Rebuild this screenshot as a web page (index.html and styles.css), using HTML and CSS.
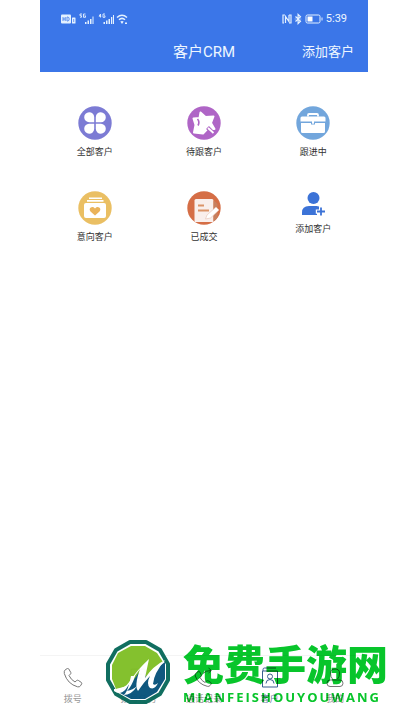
FILE: index.html
```html
<!DOCTYPE html>
<html lang="zh-CN">
<head>
<meta charset="utf-8">
<meta name="viewport" content="width=device-width, initial-scale=1">
<title>客户CRM</title>
<link rel="stylesheet" href="styles.css">
</head>
<body>
<div class="app">
  <header class="top">
    <div class="status">
      <div class="status-group">
        <svg width="68" height="12" viewBox="0 0 68 12" fill="#e4f1ff" aria-hidden="true">
          <rect x="0" y="1.500" width="10" height="9" rx="1"/>
          <path d="M2 4v4M4.200 4v4M2 6h2.200M6 4v4h.5q1.700 0 1.700-2T6.500 4z" stroke="#3b76e8" stroke-width=".8" fill="none"/>
          <rect x="11" y="4.500" width="3.500" height="6" rx=".5"/><path d="M12.700 6v3" stroke="#3b76e8" stroke-width=".7"/>
          <path d="M21 1h-2v1.700h1.500v1.500H19M24.500 1h-2v3.300h2V2.800h-1" fill="none" stroke="#e4f1ff" stroke-width=".9"/>
          <path d="M24 9h1.500v2H24zM26.500 7.500H28V11h-1.500zM29 6h1.500v5H29zM31.500 3.500h1V11h-1z"/>
          <path d="M39.500 4.500V1L38 3.200h2.300M44 1h-2v3.300h2V2.800h-1" fill="none" stroke="#e4f1ff" stroke-width=".9"/>
          <path d="M42.500 9H44v2h-1.500zM45 7.500h1.500V11H45zM47.500 6H49v5h-1.500zM50 4h1.300v7H50zM52 2h1v9h-1z"/>
          <path d="M56 4.500q5-4.500 10 0M58 6.800q3-2.800 6 0" fill="none" stroke="#e4f1ff" stroke-width="1.500"/>
          <path d="M59.300 8.600q1.700-1.400 3.400 0L61 11zM64 9.500h2V11h-2z"/>
        </svg>
      </div>
      <div class="status-group">
        <svg width="42" height="12" viewBox="0 0 42 12" fill="none" stroke="#e4f1ff" aria-hidden="true">
          <path d="M4 2H2v8h1M4.500 10V3.500L8 8.500V2M8 2h2v8H8" stroke-width="1.200"/>
          <path d="M14.500 3.500l5 4.700-2.400 2.300v-9l2.400 2.300-5 4.700" stroke-width="1.200"/>
          <path d="M13.800 6h.7M19.500 6h.7"/>
          <rect x="25" y="2" width="14" height="8" rx="1.500"/>
          <rect x="26.500" y="3.500" width="5" height="5" fill="#fff" stroke="none"/>
          <path d="M41 4.500v3"/>
        </svg>
        <time>5:39</time>
      </div>
    </div>
    <div class="title-bar">
      <h1>客户CRM</h1>
      <button class="add" type="button">添加客户</button>
    </div>
  </header>

  <main class="menu">
    <a class="entry" href="#all">
      <svg width="34" height="34" viewBox="0 0 34 34" aria-hidden="true"><circle cx="17" cy="17" r="16.700" fill="#7c7bd4"/><path fill="#fff" d="M16.200 16.200h-5A5 5 0 1 1 16.200 11zM17.800 16.200V11a5 5 0 1 1 5.200 5.200zM16.200 17.800V23A5 5 0 1 1 11 17.800zM17.800 17.800H23a5 5 0 1 1-5.200 5.200z"/></svg>
      <span>全部客户</span>
    </a>
    <a class="entry" href="#pending">
      <svg width="34" height="34" viewBox="0 0 34 34" aria-hidden="true"><circle cx="17" cy="17" r="16.700" fill="#af65c6"/><path d="M13.500 6.500l5 4.500 8-.5-2.500 6.500 3.500 6-7-.2-4.500 4.700-9-1 1.500-7.500-2-6.500 6-.5z" fill="#fff" stroke="#fff" stroke-width="2" stroke-linejoin="round"/><path d="M10.500 13q2.500 3 .5 6.500" fill="none" stroke="#af65c6" stroke-width="1.600"/><path d="M20.500 21.500l6 6" stroke="#af65c6" stroke-width="4"/><path d="M21 22l5.500 5" stroke="#fff" stroke-width="1.800"/></svg>
      <span>待跟客户</span>
    </a>
    <a class="entry" href="#following">
      <svg width="34" height="34" viewBox="0 0 34 34" aria-hidden="true"><circle cx="17" cy="17" r="16.700" fill="#72a6dc"/><path d="M12 10.500V9q0-1 1-1h8q1 0 1 1v1.500" fill="none" stroke="#fff" stroke-width="1.800"/><path d="M6 10.500h22q1.500 0 1.500 1.500v3.500h-25V12q0-1.500 1.500-1.500zM5 17h10v1.500h4V17h10v8.500q0 1.500-1.500 1.500h-21Q5 27 5 25.500z" fill="#fff"/><rect x="16" y="15" width="2" height="2.700" fill="#fff"/></svg>
      <span>跟进中</span>
    </a>
    <a class="entry" href="#intent">
      <svg width="34" height="34" viewBox="0 0 34 34" aria-hidden="true"><circle cx="17" cy="17" r="16.700" fill="#eabf63"/><path d="M11 6.500h13V8H11zM9 9h16.500v1.800H9z" fill="#fff"/><rect x="6" y="12" width="22" height="15" rx="2" fill="#fff"/><path d="M17 24.500l-4.500-4q-1.800-2.500.3-4 2.200-1.200 4.200 1 2-2.200 4.200-1 2.100 1.500.3 4z" fill="#eab35a"/></svg>
      <span>意向客户</span>
    </a>
    <a class="entry" href="#deal">
      <svg width="34" height="34" viewBox="0 0 34 34" aria-hidden="true"><defs><clipPath id="disc"><circle cx="17" cy="17" r="16.700"/></clipPath></defs><circle cx="17" cy="17" r="16.700" fill="#d56e46"/><g clip-path="url(#disc)"><path d="M9 8h16q1.500 0 1.500 1.500V31h-19V9.500Q7.500 8 9 8z" fill="#f9efec"/><path d="M26.500 9l4 4v17h-4z" fill="#c7805f"/><path d="M11 14.500h6M11 19.500h11" stroke="#db9468" stroke-width="2.200"/><path d="M29 16l3 3-8.500 8-5 1 1.500-4z" fill="#fff" stroke="#e5c1b1" stroke-width=".6"/></g></svg>
      <span>已成交</span>
    </a>
    <a class="entry" href="#add">
      <svg width="26" height="26" viewBox="0 0 26 26" fill="#3c73d7" aria-hidden="true"><circle cx="13.500" cy="7" r="6"/><path d="M2 24v-2.500Q2 15 9 15h7.500q1.500 0 2.500.4v3.100h-3.200v4.200h1.200V24z"/><path d="M21 16.500v8M17 20.500h8" stroke="#3c73d7" stroke-width="1.800"/></svg>
      <span>添加客户</span>
    </a>
  </main>

  <nav class="tabs">
    <a class="tab" href="#dial">
      <svg width="22" height="22" viewBox="0 0 22 22" aria-hidden="true"><path d="M3.500 2.500l2-1q.8-.3 1.300.5l2 3.500q.4.800-.3 1.500L7 8.500q2 4.300 6 6.500l1.700-1.500q.8-.6 1.600-.1l3 2q.8.600.4 1.400l-1.200 2q-1 1.500-3 1Q5.500 17 2.300 6.500q-.6-2.500 1.200-4z"/></svg>
      <span>拨号</span>
    </a>
    <a class="tab" href="#tasks">
      <svg width="22" height="22" viewBox="0 0 22 22" aria-hidden="true"><rect x="4" y="2" width="14" height="18" rx="1"/><path d="M7 7h8M7 11h8M7 15h5"/></svg>
      <span>拨号任务</span>
    </a>
    <a class="tab" href="#calls">
      <svg width="22" height="22" viewBox="0 0 22 22" aria-hidden="true"><path d="M3.500 5.500l2-1q.8-.3 1.300.5l1.500 3q.3.700-.3 1.200L7 10.500q1.800 3.500 5 5l1.700-1.500q.8-.6 1.600-.1l2.500 1.600q.8.600.4 1.400l-1 1.500q-1 1.400-3 .9Q5 17 2.300 9q-.6-2 1.200-3.500zM10 6.500q2.500-3 8-3M15.500 1l3 2.500-3 2.500"/></svg>
      <span>通话记录</span>
    </a>
    <a class="tab active" href="#customers">
      <svg width="22" height="22" viewBox="0 0 22 22" aria-hidden="true"><path d="M4 4V2.500Q4 1 5.500 1H17M3.500 4h15v16h-15z"/><circle cx="11" cy="9.500" r="2.500"/><path d="M7 16.500q0-4 4-4t4 4"/></svg>
      <span>客户</span>
    </a>
    <a class="tab" href="#me">
      <svg width="22" height="22" viewBox="0 0 22 22" aria-hidden="true"><path d="M8.500 12Q6.500 10 6.500 6t4.500-4 4.500 4-2 6M6 13h10q3 0 3 3.200T16 19.500H6q-3 0-3-3.300T6 13z"/></svg>
      <span>我的</span>
    </a>
  </nav>
</div>

<div class="emblem">
  <svg width="66" height="66" viewBox="0 0 66 66" aria-hidden="true">
    <path d="M41 3l14 8 8 14v16l-8 14-14 8H25l-14-8-8-14V25l8-14 14-8z" fill="#fff" stroke="#08695a" stroke-width="4" stroke-linejoin="round"/>
    <path d="M40 7l12 7 6 9-14 18-33 9-4-10V26l6-12 13-7z" fill="#7fbf26"/>
    <path d="M10 51q12 0 20-12l12-17-2 16 20-15v17l-8 13-12 7H26l-11-6z" fill="#07527a"/>
    <path d="M9 50q10 1 16-8 8-12 19-22l-4 19q8-12 20-18-11 13-12 24 2 2 5-1-3 7-8 5-4-4 0-12-6 6-12 15-4-5 2-22-9 12-14 20-6 7-12 2z" fill="#fff"/>
    <path d="M30 37q-3 10-8 15 6-1 10-5-5 9-14 9 4 0 8-19z" fill="#fff"/>
  </svg>
</div>
<div class="mark">
  <strong>免费手游网</strong>
  <span>MIANFEISHOUYOUWANG</span>
</div>
</body>
</html>
```
FILE: styles.css
```css
* {
  box-sizing: border-box;
}

body {
  margin: 0;
  background: #fff;
  color: #333;
  font-family: Roboto, "Noto Sans CJK SC", sans-serif;
}

a {
  color: inherit;
  text-decoration: none;
}

svg {
  display: block;
  flex: none;
}

.app {
  display: flex;
  flex-direction: column;
  min-height: 100vh;
  margin: 0 8% 0 10%;
}

.top {
  background: #3b76e8;
  color: #eef6ff;
  padding-top: 12px;
}

.status {
  display: flex;
  justify-content: space-between;
  align-items: center;
  height: 14px;
  padding: 0 21px;
}

.status-group {
  display: flex;
  align-items: center;
  gap: 3px;
  font-size: 11px;
  line-height: 14px;
}

.title-bar {
  display: grid;
  grid-template-columns: 1fr auto 1fr;
  align-items: center;
  height: 46px;
  padding: 6px 14px 0;
}

h1 {
  grid-column: 2;
  margin: 0;
  font-size: 15px;
  font-weight: 400;
  line-height: 20px;
}

.add {
  justify-self: end;
  padding: 0;
  border: 0;
  background: none;
  color: inherit;
  font: inherit;
  font-size: 13px;
  line-height: 20px;
}

.menu {
  display: grid;
  grid-template-columns: repeat(3, 1fr);
  grid-auto-rows: 85px;
  align-content: start;
  flex: 1;
  padding-top: 34px;
}

.entry {
  display: flex;
  flex-direction: column;
  align-items: center;
  gap: 4px;
  font-size: 9px;
  line-height: 16px;
}

.tabs {
  display: grid;
  grid-template-columns: repeat(5, 1fr);
  height: 56px;
  border-top: 1px solid #f4f4f4;
  color: #999;
}

.tab {
  display: flex;
  flex-direction: column;
  align-items: center;
  gap: 3px;
  padding-top: 11px;
  font-size: 9px;
  line-height: 14px;
  white-space: nowrap;
}

.tab svg {
  fill: none;
  stroke: #777;
}

.active {
  color: #6f83a5;
}

.active svg {
  stroke: #3b5f91;
}

.emblem,
.mark {
  position: fixed;
  pointer-events: none;
}

.emblem {
  right: 229px;
  bottom: 6px;
  opacity: .96;
}

.mark {
  right: 12px;
  bottom: 6px;
  display: flex;
  flex-direction: column;
  gap: 2px;
  color: #08c52b;
  mix-blend-mode: multiply;
}

.mark strong {
  font-family: "Noto Sans CJK SC", sans-serif;
  font-size: 41px;
  font-weight: 900;
  line-height: 50px;
}

.mark span {
  font-family: "Open Sans", sans-serif;
  font-size: 13px;
  font-weight: 700;
  line-height: 16px;
  letter-spacing: 2px;
}
```
